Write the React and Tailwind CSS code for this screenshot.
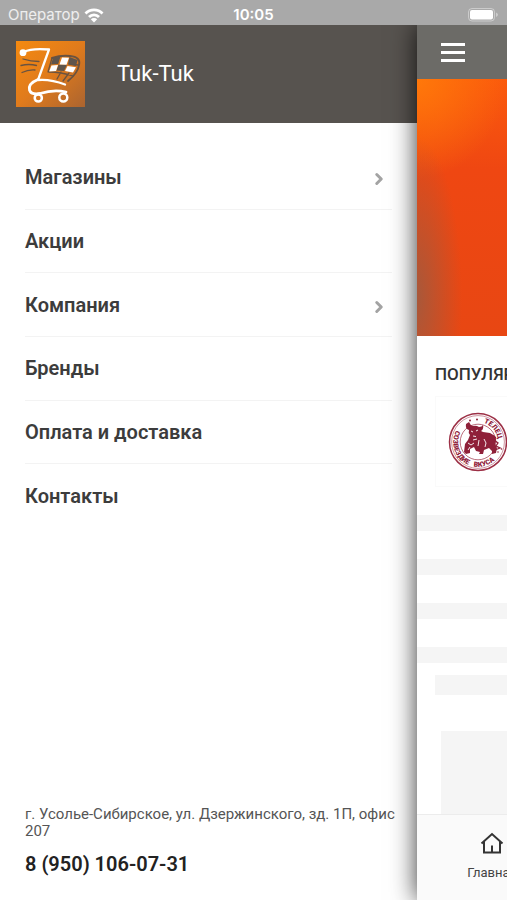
import clsx from "clsx";
import { ChevronRight } from "lucide-react";

const MENU = [
  { label: "Магазины", nested: true },
  { label: "Акции" },
  { label: "Компания", nested: true },
  { label: "Бренды" },
  { label: "Оплата и доставка" },
  { label: "Контакты" },
];

function WifiIcon() {
  return (
    <svg viewBox="0 0 20 16" className="h-4 w-5" fill="none" stroke="white" strokeWidth="2.800">
      <path d="M1.500 6.500a12 12 0 0 1 17 0" />
      <path d="M5 10a7 7 0 0 1 10 0" />
      <path d="M10 15.500 6.800 12.300a4.500 4.500 0 0 1 6.400 0Z" fill="white" stroke="none" />
    </svg>
  );
}

function BatteryIcon() {
  return (
    <svg viewBox="0 0 32 16" className="h-4 w-8" fill="none">
      <rect x="1.500" y="1.500" width="26" height="12.500" rx="3.500" stroke="white" strokeOpacity="0.4" />
      <rect x="3" y="3" width="23" height="9.500" rx="2" fill="white" />
      <path d="M29.200 5.500v4.500q1.600-.7 1.600-2.200t-1.600-2.300Z" fill="white" fillOpacity="0.5" />
    </svg>
  );
}

function StatusBar() {
  return (
    <div className="relative z-20 grid h-[25px] grid-cols-3 items-center bg-[#a9a9a9] px-2 text-white">
      <div className="flex items-center gap-1 pt-1">
        <span className="font-[Inter] text-[15px] leading-4 text-white/80">Оператор</span>
        <WifiIcon />
      </div>
      <span className="pt-1 text-center font-[Inter] text-[15px] font-semibold leading-4">10:05</span>
      <div className="flex justify-end pt-1">
        <BatteryIcon />
      </div>
    </div>
  );
}

function CartLogo() {
  return (
    <svg viewBox="0 0 69 66" className="h-[66px] w-[69px]" fill="none" strokeLinecap="round" strokeLinejoin="round">
      <defs>
        <linearGradient id="cart-bg" x1="0" y1="0" x2="1" y2="1">
          <stop offset="0" stopColor="#f58a10" />
          <stop offset="0.5" stopColor="#e07b1c" />
          <stop offset="1" stopColor="#ab6430" />
        </linearGradient>
      </defs>
      <rect width="69" height="66" fill="url(#cart-bg)" />
      <g stroke="#6a5340" strokeWidth="1.300">
        <path d="M7 18q8 2.500 16 2.500M5 24.500q8-2 15.500 0M6 31.500q6-3 13-2.500" />
        <path d="M36 17q9-3 18-2 11 1 9 9-1 8-11 16" strokeWidth="1.900" />
        <path d="M36 17 32 31M33 31q12 0 24 4M62 24l-8-1M45 31l-4 7M53 32l-6 8" />
      </g>
      <g fill="#5f554c">
        <path d="m37 17 7.500-1.500-2.300 7.500-7.200.5ZM53.500 16l8 3-1.500 6-8-1.500ZM42.500 23.500l8.500.3-3 6.200-7.500-.4Z" />
      </g>
      <g fill="white">
        <path d="m46 16.500 7 .3-2.500 7-7-.3ZM35.500 24.500l6.500-.5-2 6-6.800.6ZM51.500 25l8.500 1.200-3 5.300-8-1.500Z" />
      </g>
      <circle cx="7" cy="11.700" r="3.400" fill="white" />
      <path d="M8 11Q15 7 33 8.500L22 39q13-1 27 4.500" stroke="white" strokeWidth="2.300" />
      <path d="M22 38.500q-10 4-8.500 10.500 1.500 5 10.500 3.500 14-4.500 26-1.500" stroke="white" strokeWidth="2.800" />
      <circle cx="22.300" cy="57" r="3.600" stroke="white" strokeWidth="2.500" />
      <circle cx="47.300" cy="56.500" r="4" stroke="white" strokeWidth="2.500" />
    </svg>
  );
}

function BrandStamp() {
  return (
    <svg viewBox="0 0 60 60" className="h-[60px] w-[60px] shrink-0" fill="none">
      <defs>
        <path id="stamp-top" d="M35.800 10.800A20 20 0 0 1 48 38.700" />
        <path id="stamp-left" d="M8 18.500A24.800 24.800 0 0 0 22 53.500" />
        <path id="stamp-bottom" d="M25.500 54.400A24.800 24.800 0 0 0 51.500 42.400" />
      </defs>
      <circle cx="30" cy="30" r="28.500" stroke="#9c2f45" strokeWidth="1.500" />
      <circle cx="30" cy="30" r="26.400" stroke="#9c2f45" strokeWidth="0.500" />
      <circle cx="30" cy="30" r="17.800" stroke="#9c2f45" strokeWidth="0.700" />
      <g fill="#8f2039" className="font-[Roboto] text-[7px] font-black">
        <text>
          <textPath href="#stamp-top">ТЕЛЕЦ</textPath>
        </text>
        <text>
          <textPath href="#stamp-left">СОЗВЕЗДИЕ</textPath>
        </text>
        <text>
          <textPath href="#stamp-bottom">ВКУСА</textPath>
        </text>
      </g>
      <path
        d="M18 12q-1 5 3 6-1 3 1 5l-2 5-3 4-1 8 2 2 4-1 0-4 4-2 2 4 4 1-1 2h4l1-4 5-2 3 3 0 3 4-1 1-5-2-4q2-4 0-8l-5-3-7-1-2-1q3-2 2-6-1 2-4 2-3-2-6-1-3-1-4-4Z"
        fill="#8f2039"
      />
      <path d="M23 19l2 1M28 19l2-1M25 24l3 .5M20 31l3 2 3-2M31 28l-1 6M36 27l2 4-1 4M25 28l4-1M20 38l2-3M39 38l2 1" stroke="white" strokeWidth="0.900" />
      <path d="m46 28 4 3-2 3 4 2-5 2M45 24l3 2" stroke="#8f2039" strokeWidth="1.300" />
      <g fill="#8f2039">
        <circle cx="22" cy="8.500" r="1" />
        <circle cx="29" cy="7.500" r="1" />
        <circle cx="53.500" cy="37" r="0.800" />
        <circle cx="50" cy="40" r="0.800" />
      </g>
    </svg>
  );
}

function HomeIcon() {
  return (
    <svg viewBox="0 0 24 24" className="h-6 w-6" fill="none" stroke="#333" strokeWidth="2">
      <path d="M1.500 12.500 12 3 22.500 12.500M4 10.500V21.500H20V10.500M12 21.500V14.500" />
    </svg>
  );
}

function Drawer() {
  return (
    <aside className="flex min-w-0 flex-1 flex-col bg-white">
      <header className="flex h-[98px] items-center gap-8 bg-[#57534f] pl-4">
        <CartLogo />
        <h1 className="text-[22px] leading-6 text-white">Tuk-Tuk</h1>
      </header>
      <nav className="px-[25px] pt-[23px]">
        <ul className="grid h-[382px] grid-rows-6">
          {MENU.map(({ label, nested }, i) => (
            <li key={label} className={clsx(i < MENU.length - 1 && "border-b border-[#f3f3f3]")}>
              <a href="#" className="flex h-full items-center justify-between text-[20px] font-semibold leading-6 text-[#3c3c3c]">
                {label}
                {nested && <ChevronRight size={18} strokeWidth={4} className="mr-1 mt-1 shrink-0 text-[#a3a3a3]" />}
              </a>
            </li>
          ))}
        </ul>
      </nav>
      <footer className="mt-auto flex flex-col gap-3 pb-6 pl-[25px] pr-4">
        <address className="text-[15px] not-italic leading-[17px] text-[#555]">
          г. Усолье-Сибирское, ул. Дзержинского, зд. 1П, офис 207
        </address>
        <a href="tel:+79501060731" className="text-[20px] font-semibold leading-6 text-[#222]">
          8 (950) 106-07-31
        </a>
      </footer>
    </aside>
  );
}

function ShopPage() {
  return (
    <main className="relative z-10 flex w-[90px] shrink-0 flex-col bg-white shadow-[0_0_24px_rgba(0,0,0,0.8)]">
      <div className="flex h-[54px] items-center bg-[#6c6b67] pl-6">
        <button type="button" aria-label="Меню" className="flex w-6 flex-col gap-[5px]">
          <span className="h-[3px] bg-white" />
          <span className="h-[3px] bg-white" />
          <span className="h-[3px] bg-white" />
        </button>
      </div>
      <div className="h-[257px] bg-[radial-gradient(ellipse_45px_160px_at_0%_85%,#a8583a,transparent),radial-gradient(ellipse_90px_100px_at_0%_0%,#ff780a,transparent),linear-gradient(#fb5a0c,#ef4712_35%,#e84713)]" />
      <section className="flex flex-1 flex-col overflow-hidden">
        <h2 className="whitespace-nowrap pl-[18px] pt-7 text-[17px] font-medium leading-5 text-[#333]">ПОПУЛЯРНЫЕ</h2>
        <div className="ml-[18px] mt-3 flex h-[91px] items-center border-y border-l border-[#fafafa] pl-3">
          <BrandStamp />
        </div>
        <div className="mt-7 flex flex-col gap-7">
          <div className="h-4 bg-[#f5f5f5]" />
          <div className="h-4 bg-[#f5f5f5]" />
          <div className="h-4 bg-[#f5f5f5]" />
          <div className="h-4 bg-[#f5f5f5]" />
        </div>
        <div className="ml-[18px] mt-3 h-5 bg-[#f5f5f5]" />
        <div className="ml-6 mt-9 flex-1 bg-[#f5f5f5]" />
      </section>
      <nav className="h-[86px] overflow-hidden border-t border-[#ececec] bg-[#fafafa] pt-4">
        <a href="#" className="flex w-[150px] flex-col items-center gap-2 text-[13px] leading-5 text-[#444]">
          <HomeIcon />
          Главная
        </a>
      </nav>
    </main>
  );
}

export default function App() {
  return (
    <div className="flex min-h-screen flex-col overflow-hidden bg-white font-[Roboto,sans-serif]">
      <StatusBar />
      <div className="flex flex-1">
        <Drawer />
        <ShopPage />
      </div>
    </div>
  );
}
